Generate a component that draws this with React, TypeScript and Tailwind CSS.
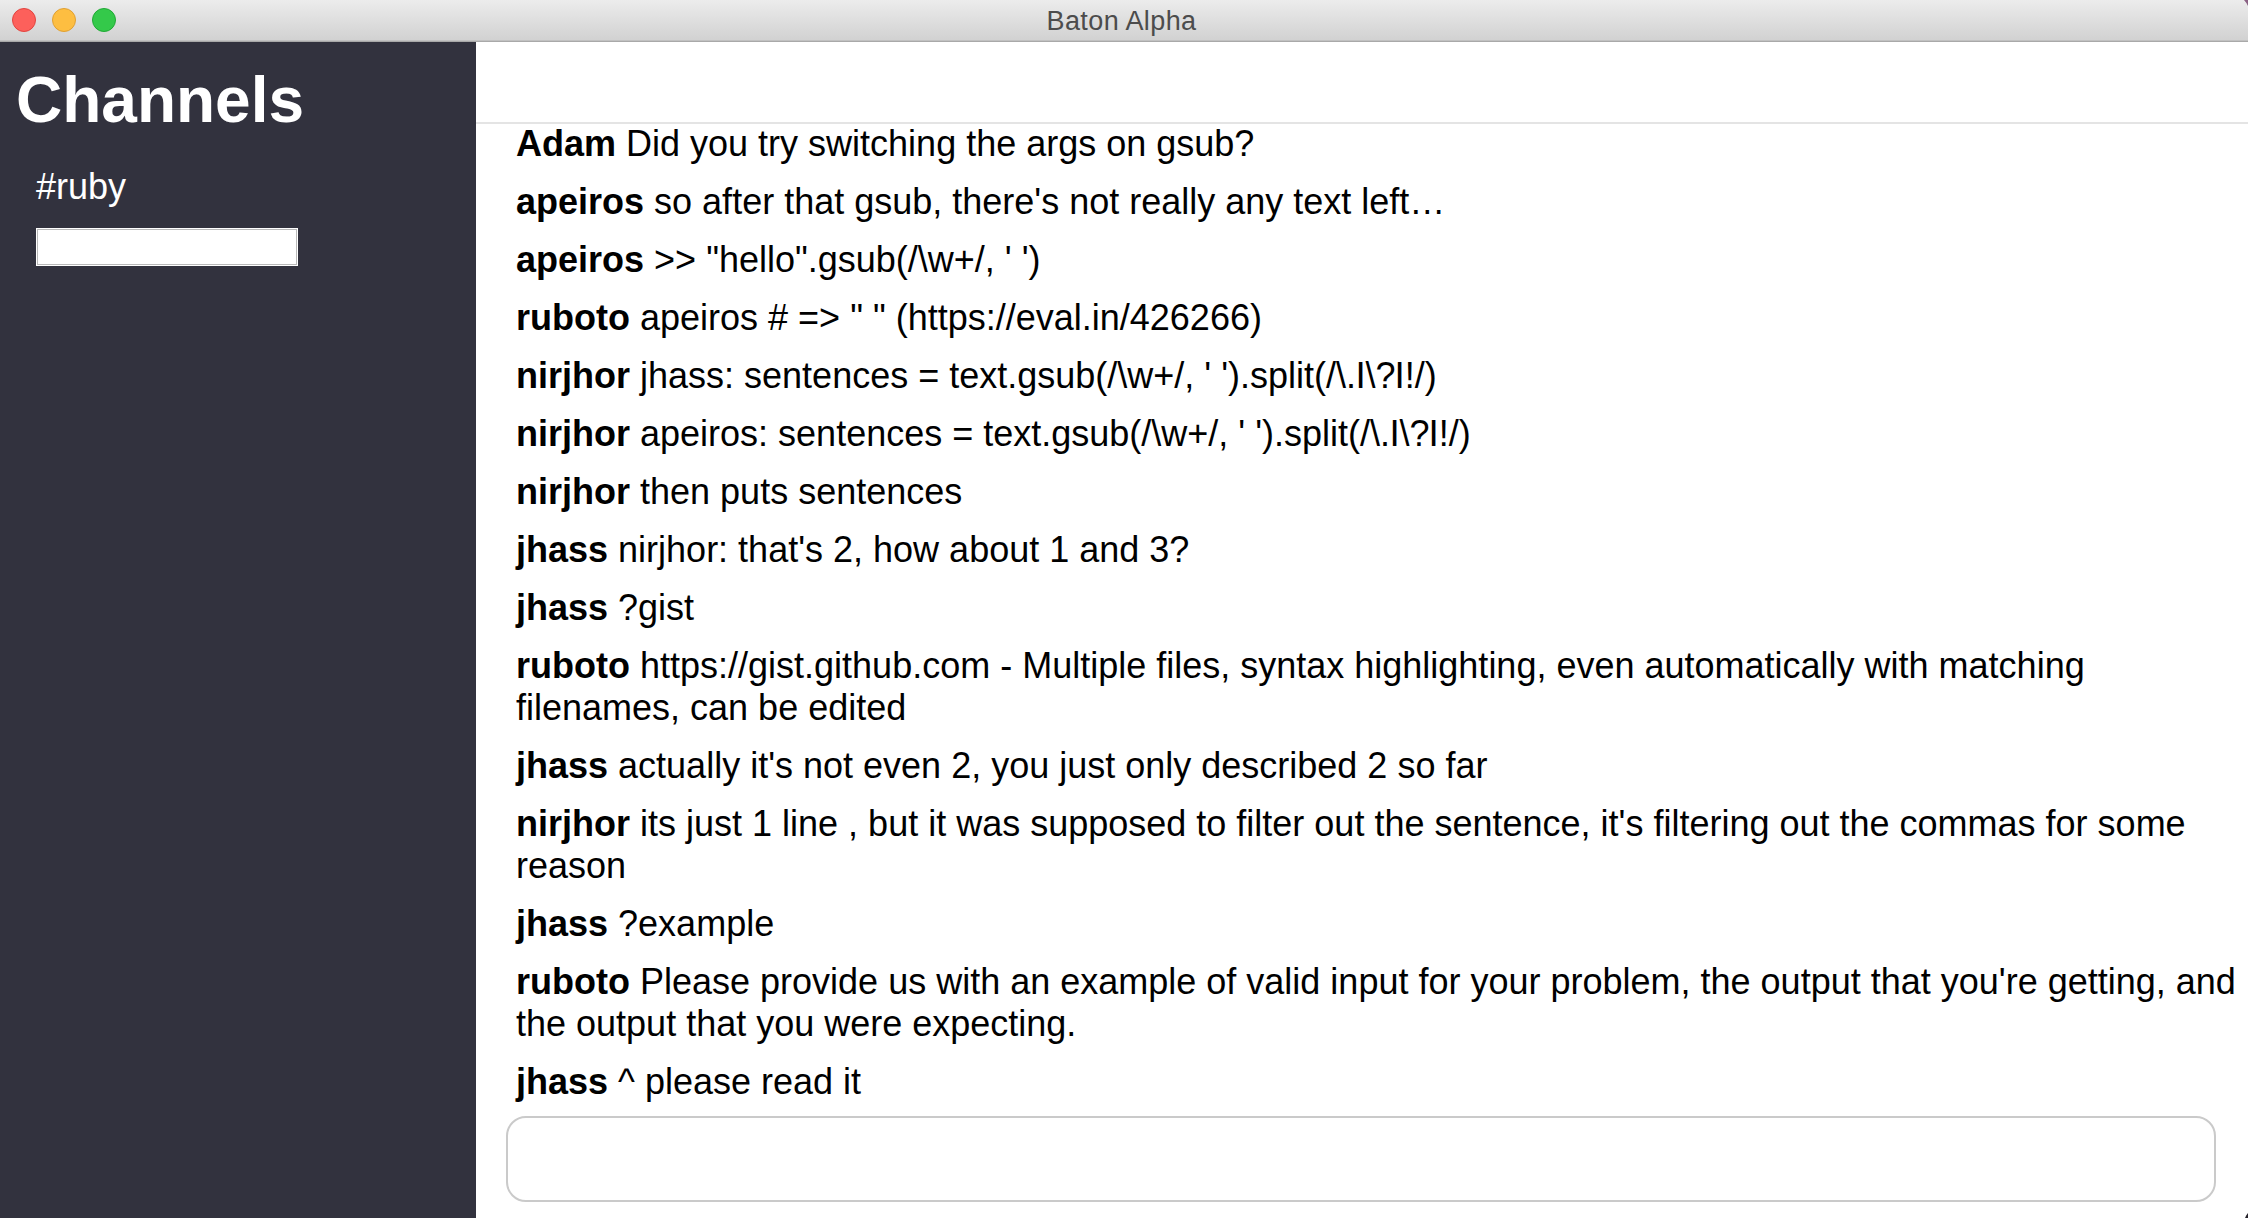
import { Fragment } from "react";

const messages: { nick: string; text: string }[] = [
  { nick: "Adam", text: "Did you try switching the args on gsub?" },
  { nick: "apeiros", text: "so after that gsub, there's not really any text left…" },
  { nick: "apeiros", text: ">> \"hello\".gsub(/\\w+/, ' ')" },
  { nick: "ruboto", text: "apeiros # => \" \" (https://eval.in/426266)" },
  { nick: "nirjhor", text: "jhass: sentences = text.gsub(/\\w+/, ' ').split(/\\.|\\?|!/)" },
  { nick: "nirjhor", text: "apeiros: sentences = text.gsub(/\\w+/, ' ').split(/\\.|\\?|!/)" },
  { nick: "nirjhor", text: "then puts sentences" },
  { nick: "jhass", text: "nirjhor: that's 2, how about 1 and 3?" },
  { nick: "jhass", text: "?gist" },
  { nick: "ruboto", text: "https://gist.github.com - Multiple files, syntax highlighting, even automatically with matching filenames, can be edited" },
  { nick: "jhass", text: "actually it's not even 2, you just only described 2 so far" },
  { nick: "nirjhor", text: "its just 1 line , but it was supposed to filter out the sentence, it's filtering out the commas for some reason" },
  { nick: "jhass", text: "?example" },
  { nick: "ruboto", text: "Please provide us with an example of valid input for your problem, the output that you're getting, and the output that you were expecting." },
  { nick: "jhass", text: "^ please read it" },
];

/* Pipes are drawn at cap height, without a descender. */
function MessageText({ text }: { text: string }) {
  return (
    <>
      {text.split("|").map((part, i) => (
        <Fragment key={i}>
          {i > 0 && <span className="inline-block origin-[50%_16%] scale-x-[1.2] scale-y-[0.775]">|</span>}
          {part}
        </Fragment>
      ))}
    </>
  );
}

function TitleBar() {
  return (
    <header className="relative flex h-[42px] shrink-0 items-center justify-center border-b border-[#a9a9a9] bg-linear-to-b from-[#ececec] to-[#d1d1d1] shadow-[inset_0_-1px_0_#c1c1c1]">
      <div className="absolute left-3 top-2 flex gap-4">
        <span className="size-6 rounded-full border border-[#e2443f] bg-[#fd605b]" />
        <span className="size-6 rounded-full border border-[#e0a032] bg-[#fdbe41]" />
        <span className="size-6 rounded-full border border-[#20a935] bg-[#34c94a]" />
      </div>
      <h1 className="mr-[5px] text-[27px] leading-[40px] tracking-[0.4px] text-[#4c4c4c]">Baton Alpha</h1>
    </header>
  );
}

function Sidebar() {
  return (
    <aside className="w-[476px] shrink-0 bg-[#32323e] text-white">
      <h2 className="ml-4 mt-[21px] text-[64px] font-bold leading-[74px]">Channels</h2>
      <ul className="ml-9 mt-[29px]">
        <li className="text-[36px] leading-[42px]">#ruby</li>
      </ul>
      <input className="ml-9 mt-5 block h-[38px] w-[262px] border border-white bg-white text-2xl text-black shadow-[inset_0_0_0_1px_#b9b9b9] outline-none" />
    </aside>
  );
}

export default function App() {
  return (
    <div className="relative flex h-[1218px] w-[2248px] flex-col overflow-hidden bg-white font-['Liberation_Sans',Arial,sans-serif] text-black">
      <TitleBar />
      <div className="flex min-h-0 flex-1">
        <Sidebar />
        <main className="flex min-w-0 flex-1 flex-col">
          <div className="h-[82px] shrink-0 border-b-2 border-[#e4e4e4]" />
          <ul className="-mt-px flex min-h-0 flex-1 flex-col gap-4 pl-10 text-[36px] leading-[42px]">
            {messages.map((m, i) => (
              <li key={i}>
                <strong className="font-bold">{m.nick}</strong> <MessageText text={m.text} />
              </li>
            ))}
          </ul>
          <input className="mb-4 ml-[30px] mr-8 h-[86px] shrink-0 rounded-[20px] border-2 border-[#cacaca] px-4 text-[36px] outline-none" />
        </main>
      </div>
      {/* desktop showing past the rounded window corners */}
      <span className="absolute right-0 top-0 h-[6px] w-[4px] bg-[#8a6184] [clip-path:polygon(0_0,100%_0,100%_100%,60%_50%)]" />
      <span className="absolute bottom-0 right-0 h-[5px] w-[3px] bg-[#26232b] [clip-path:polygon(100%_0,100%_100%,0_100%,40%_50%)]" />
    </div>
  );
}
